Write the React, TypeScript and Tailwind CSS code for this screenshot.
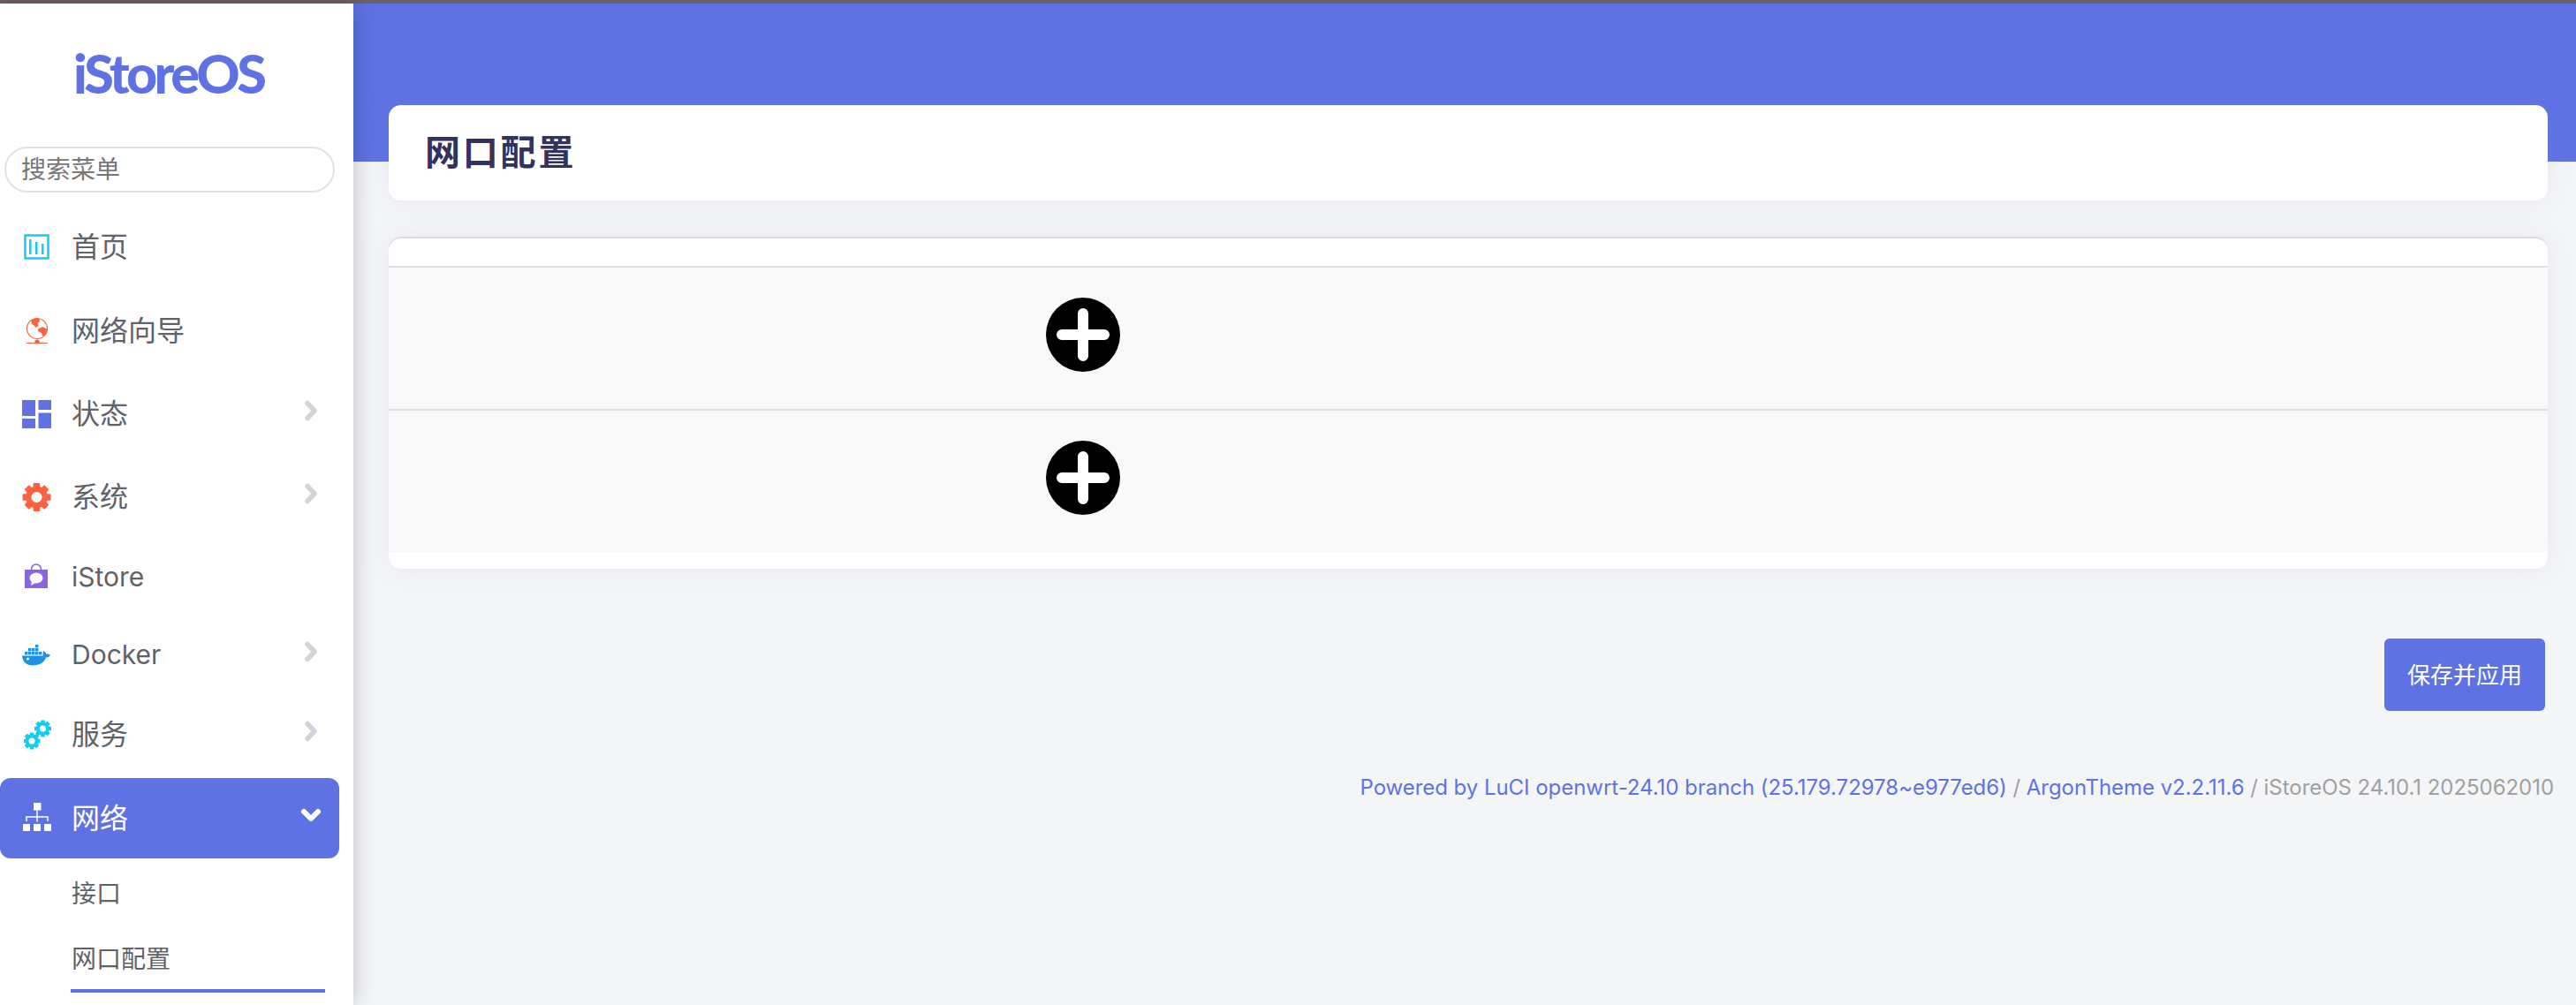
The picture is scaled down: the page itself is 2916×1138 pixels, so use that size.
import React from 'react';

const cjk = { fontFamily: 'Inter, "Noto Sans CJK SC", sans-serif' };

function Chevron({ open }: { open?: boolean }) {
  if (open) {
    return (
      <svg width="24" height="18" viewBox="0 0 24 18" fill="none" stroke="#fff" strokeWidth="6" strokeLinecap="round" strokeLinejoin="round">
        <path d="M4 5l8 8 8-8" />
      </svg>
    );
  }
  return (
    <svg width="16" height="24" viewBox="0 0 16 24" fill="none" stroke="#d1d5db" strokeWidth="5.5" strokeLinecap="round" strokeLinejoin="round">
      <path d="M4 3.5l8 8.5-8 8.500" />
    </svg>
  );
}

function HomeIcon() {
  return (
    <svg width="30" height="30" viewBox="0 0 30 30">
      <rect x="1.500" y="1.500" width="26" height="26" fill="none" stroke="#11cdef" strokeWidth="2.500" />
      <rect x="6" y="6" width="2.500" height="17" fill="#11cdef" />
      <rect x="13" y="9" width="2.500" height="14" fill="#11cdef" />
      <rect x="20" y="11" width="2.500" height="12" fill="#11cdef" />
    </svg>
  );
}

function GlobeIcon() {
  return (
    <svg width="26" height="32" viewBox="0 0 26 32">
      <circle cx="13" cy="13" r="11.500" fill="none" stroke="#fb6340" strokeWidth="1.200" />
      <path d="M6 3.500c3-2 7-2.500 10-1l-.5 3-2 1.500 1 2.500-2.500 2.500-2.500-2.500-2.500-2z" fill="#fb6340" />
      <path d="M14 13.500l5-2.500 5 2.500c.5 3-1.500 6-3.500 7.500l-1.500.5-1-3.500-4-2z" fill="#fb6340" />
      <rect x="10.500" y="26" width="5" height="4" fill="#fb6340" />
      <path d="M13 24v3M1 29.500h24" stroke="#fb6340" strokeWidth="1.200" />
    </svg>
  );
}

function StatusIcon() {
  return (
    <svg width="33" height="32" viewBox="0 0 33 32" fill="#5e72e4">
      <rect x="0" y="0" width="15" height="18" />
      <rect x="18.500" y="0" width="14.500" height="11" />
      <rect x="0" y="21" width="15" height="11" />
      <rect x="18.500" y="14.500" width="14.500" height="17.500" />
    </svg>
  );
}

function GearIcon({ cx, cy, r, color }: { cx: number; cy: number; r: number; color: string }) {
  const teeth = [0, 45, 90, 135, 180, 225, 270, 315];
  return (
    <g fill={color}>
      {teeth.map((a) => (
        <rect
          key={a}
          x={cx - r * 0.24}
          y={cy - r}
          width={r * 0.48}
          height={r * 0.5}
          rx={r * 0.06}
          transform={`rotate(${a} ${cx} ${cy})`}
        />
      ))}
      <circle cx={cx} cy={cy} r={r * 0.58} fill="none" stroke={color} strokeWidth={r * 0.4} />
    </g>
  );
}

function SystemIcon() {
  return (
    <svg width="33" height="32" viewBox="0 0 33 32">
      <GearIcon cx={16.500} cy={16} r={16} color="#fb6340" />
    </svg>
  );
}

function StoreIcon() {
  return (
    <svg width="28" height="30" viewBox="0 0 28 30">
      <path d="M8.500 8V6.500a5.500 5.500 0 0 1 11 0V8" fill="none" stroke="#8965e0" strokeWidth="1.600" />
      <rect x="1" y="7" width="26" height="21" fill="#8965e0" />
      <ellipse cx="14" cy="16.500" rx="7.500" ry="6" fill="#fff" />
      <path d="M9 20l-1 5 5-3z" fill="#fff" />
    </svg>
  );
}

function DockerIcon() {
  return (
    <svg width="32" height="26" viewBox="0 0 32 26">
      <g fill="#1d91e8">
        <rect x="3" y="10" width="3.400" height="3.400" />
        <rect x="7" y="10" width="3.400" height="3.400" />
        <rect x="11" y="10" width="3.400" height="3.400" />
        <rect x="15" y="10" width="3.400" height="3.400" />
        <rect x="19" y="10" width="3.400" height="3.400" />
        <rect x="7" y="6" width="3.400" height="3.400" />
        <rect x="11" y="6" width="3.400" height="3.400" />
        <rect x="15" y="6" width="3.400" height="3.400" />
        <rect x="15" y="2" width="3.400" height="3.400" />
        <path d="M0 14.500h23.500c.3-2 0-4 .8-5.500 1.500.7 2.700 2.200 3 3.700 1.500-.4 3.200 0 4.700 1-1 2-3 2.800-5 2.800C25 22 20 25.500 12 25.500 5 25.500 .5 21.500 0 14.500z" />
      </g>
      <circle cx="6.500" cy="18" r="1.500" fill="#fff" />
    </svg>
  );
}

function ServiceIcon() {
  return (
    <svg width="31" height="34" viewBox="0 0 31 34">
      <GearIcon cx={21.500} cy={10} r={9.500} color="#11cdef" />
      <GearIcon cx={9} cy={24} r={9.500} color="#11cdef" />
    </svg>
  );
}

function NetworkIcon() {
  return (
    <svg width="34" height="34" viewBox="0 0 34 34" fill="#fff">
      <rect x="13" y="1" width="8.500" height="8.500" />
      <rect x="1" y="25" width="8" height="8" />
      <rect x="13" y="25" width="8" height="8" />
      <rect x="25" y="25" width="8" height="8" />
      <path d="M17 9.500v13M5 22v-5h24v5" fill="none" stroke="#fff" strokeWidth="1.500" />
    </svg>
  );
}

function PlusCircle() {
  return (
    <svg width="84" height="84" viewBox="0 0 84 84">
      <circle cx="42" cy="42" r="42" fill="#000" />
      <path d="M42 18v48M18 42h48" stroke="#fff" strokeWidth="12" strokeLinecap="round" />
    </svg>
  );
}

const menu = [
  { label: '首页', icon: <HomeIcon />, h: 'h-[95px]', text: 'text-[32px]', pad: 'pl-[27px]' },
  { label: '网络向导', icon: <GlobeIcon />, h: 'h-[95px]', text: 'text-[32px]', pad: 'pl-[29px]' },
  { label: '状态', icon: <StatusIcon />, h: 'h-[94px]', text: 'text-[32px]', pad: 'pl-[25px]', arrow: 'mb-[8px]' },
  { label: '系统', icon: <SystemIcon />, h: 'h-[94px]', text: 'text-[32px]', pad: 'pl-[25px]', arrow: 'mb-[8px]' },
  { label: 'iStore', icon: <StoreIcon />, h: 'h-[86px]', text: 'text-[30px]', pad: 'pl-[27px]' },
  { label: 'Docker', icon: <DockerIcon />, h: 'h-[90px]', text: 'text-[30px]', pad: 'pl-[25px]', arrow: 'mb-[6px]' },
  { label: '服务', icon: <ServiceIcon />, h: 'h-[92px]', text: 'text-[32px]', pad: 'pl-[27px]', arrow: 'mb-[8px]' },
];

function PlusRow() {
  return (
    <div className="h-[160px] bg-[#f9f9f9] pl-[744px] pt-[34px]">
      <PlusCircle />
    </div>
  );
}

export default function App() {
  return (
    <div className="h-[1138px] w-[2916px] flex flex-col overflow-hidden bg-[#f4f5f7]" style={cjk}>
      <div className="h-[4px] bg-[#6f5f68]" />
      <div className="flex-1 flex min-h-0">
        <aside className="w-[400px] shrink-0 bg-white relative z-10 shadow-[0_0_24px_rgba(0,0,0,0.22)] flex flex-col">
          <div className="h-[162px] pt-[44px] pl-[83px]">
            <div className="font-black text-[#5e72e4] text-[61px] leading-[70px] tracking-[-3.600px]" style={{ fontFamily: 'Lato, sans-serif' }}>
              iStoreOS
            </div>
          </div>
          <div className="mx-[5px] w-[374px] h-[52px] rounded-full border-2 border-[#dee2e6] pl-[17px] flex items-center text-[28px] text-[#777]">
            搜索菜单
          </div>
          <nav className="mt-[14px] flex flex-col">
            {menu.map((m) => (
              <div key={m.label} className={`${m.h} ${m.text} flex items-center text-[#5f6368]`}>
                <div className={`w-[81px] shrink-0 ${m.pad} flex justify-start`}>{m.icon}</div>
                <span className="flex-1">{m.label}</span>
                {m.arrow && <div className={`mr-[40px] ${m.arrow} flex`}><Chevron /></div>}
              </div>
            ))}
            <div className="mt-[3px] w-[384px] h-[91px] rounded-[12px] bg-[#5e72e4] text-white text-[32px] flex items-center">
              <div className="w-[81px] shrink-0 pl-[25px] mb-[4px] flex"><NetworkIcon /></div>
              <span className="flex-1">网络</span>
              <div className="mr-[20px] mb-[8px] flex"><Chevron open /></div>
            </div>
            <div className="pl-[81px] h-[80px] flex items-center text-[28px] text-[#5f6368]">接口</div>
            <div className="ml-[80px] w-[288px] h-[72px] pl-[1px] flex items-center text-[28px] text-[#5f6368] border-b-4 border-[#5e72e4]">网口配置</div>
          </nav>
        </aside>
        <main className="flex-1 min-w-0 flex flex-col">
          <div className="h-[179px] shrink-0 bg-[#5e72e4]" />
          <div className="-mt-[64px] ml-[40px] mr-[32px] h-[108px] shrink-0 bg-white rounded-[14px] shadow-[0_0_32px_rgba(136,152,170,0.12)] pl-[41px] flex items-center text-[40px] font-bold text-[#32325d] tracking-[2.800px]">
            网口配置
          </div>
          <div className="mt-[41px] ml-[40px] mr-[32px] h-[376px] shrink-0 bg-white rounded-[14px] overflow-hidden shadow-[inset_0_2px_0_#dedede,0_0_32px_rgba(136,152,170,0.12)]">
            <div className="h-[33px]" />
            <div className="h-[2px] bg-[#dedede]" />
            <PlusRow />
            <div className="h-[2px] bg-[#dedede]" />
            <PlusRow />
          </div>
          <div className="mt-[79px] mr-[35px] flex justify-end">
            <div className="w-[182px] h-[82px] rounded-[6px] bg-[#5e72e4] text-white text-[26px] flex items-center justify-center">
              保存并应用
            </div>
          </div>
          <div className="mt-[70px] pr-[25px] flex justify-end text-[24px] tracking-[-0.040px] leading-[34px] whitespace-nowrap">
            <span className="text-[#5e72e4]">Powered by LuCI openwrt-24.10 branch (25.179.72978~e977ed6)</span>
            <span className="text-[#a0a0a0]">&nbsp;/&nbsp;</span>
            <span className="text-[#5e72e4]">ArgonTheme v2.2.11.6</span>
            <span className="text-[#a0a0a0]">&nbsp;/ iStoreOS 24.10.1 2025062010</span>
          </div>
        </main>
      </div>
    </div>
  );
}
